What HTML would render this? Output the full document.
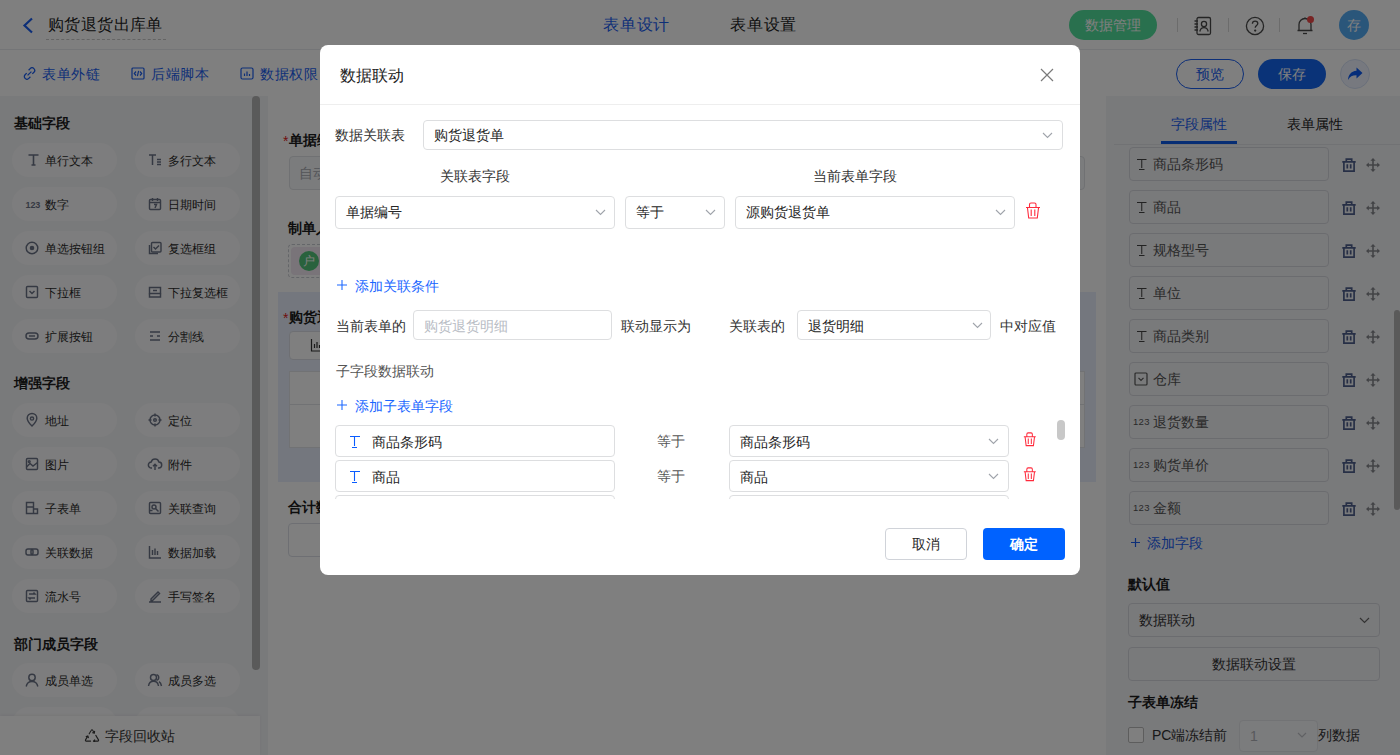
<!DOCTYPE html>
<html><head><meta charset="utf-8">
<style>
*{box-sizing:border-box;margin:0;padding:0}
html,body{width:1400px;height:755px;overflow:hidden;background:#fff;font-family:"Liberation Sans",sans-serif;color:#333;font-size:14px}
.abs{position:absolute}
.t{position:absolute;white-space:nowrap;line-height:1}
#hdr{position:absolute;left:0;top:0;width:1400px;height:50px;background:#fff;border-bottom:1px solid #e8eaee}
#tb{position:absolute;left:0;top:50px;width:1400px;height:46px;background:#fff}
#left{position:absolute;left:0;top:96px;width:268px;height:659px;background:#f3f4f7}
#canvas{position:absolute;left:268px;top:96px;width:838px;height:659px;background:#fff}
#right{position:absolute;left:1106px;top:96px;width:294px;height:659px;background:#f3f4f7}
.pill{position:absolute;width:105px;height:34px;border-radius:17px;background:#fbfbfc}
.pill .ic{position:absolute;left:13px;top:10px;width:14px;height:14px;overflow:visible}
.pill .tx{position:absolute;left:33px;top:12px;font-size:12px;line-height:13px;color:#2a2a2a;white-space:nowrap}
.h{position:absolute;font-size:14px;font-weight:bold;color:#1d1d1d;line-height:14px;white-space:nowrap}
.mask{position:absolute;left:0;top:0;width:1400px;height:755px;background:rgba(0,0,0,.5)}
.modal{position:absolute;left:320px;top:45px;width:760px;height:530px;background:#fff;border-radius:8px;overflow:hidden}
.sel{position:absolute;border:1px solid #dddee0;border-radius:4px;background:#fff}
.sel .v{position:absolute;left:10px;top:50%;margin-top:-7px;font-size:14px;line-height:14px;color:#262626;white-space:nowrap}
.chev{position:absolute;top:50%;margin-top:-3px;width:10px;height:6px}
.blue{color:#1a66ff}
</style></head><body>
<!-- ===== HEADER ===== -->
<div id="hdr">
  <svg class="abs" style="left:22px;top:17px" width="12" height="17" viewBox="0 0 12 17"><path d="M10 1.5 L2.5 8.5 L10 15.5" fill="none" stroke="#1a5ef0" stroke-width="2.2"/></svg>
  <div class="t" style="left:48px;top:17px;font-size:16px;color:#222;letter-spacing:.4px">购货退货出库单</div>
  <div class="abs" style="left:46px;top:39px;width:120px;border-top:1px dashed #c8c8c8"></div>
  <div class="t" style="left:603px;top:17px;font-size:16px;color:#1a5ef0;letter-spacing:.8px">表单设计</div>
  <div class="t" style="left:730px;top:17px;font-size:16px;color:#222;letter-spacing:.8px">表单设置</div>
  <div class="abs" style="left:1069px;top:10px;width:88px;height:30px;border-radius:15px;background:#52e09c"></div>
  <div class="t" style="left:1085px;top:18px;font-size:14px;color:#fff">数据管理</div>
  <div class="abs" style="left:1177px;top:18px;width:1px;height:14px;background:#d8d8d8"></div>
  <div class="abs" style="left:1228px;top:18px;width:1px;height:14px;background:#d8d8d8"></div>
  <div class="abs" style="left:1279px;top:18px;width:1px;height:14px;background:#d8d8d8"></div>
  <svg class="abs" style="left:1193px;top:16px" width="20" height="20" viewBox="0 0 20 20" fill="none" stroke="#4a4a4a" stroke-width="1.3"><rect x="4" y="1.5" width="13.5" height="17" rx="1.5"/><circle cx="11" cy="8" r="2.6"/><path d="M6.8 15.5c.6-2.6 2.2-3.8 4.2-3.8s3.6 1.2 4.2 3.8"/><path d="M1.5 5h3.5M1.5 8h3.5M1.5 11h3.5M1.5 14h3.5"/></svg>
  <svg class="abs" style="left:1245px;top:16px" width="20" height="20" viewBox="0 0 20 20" fill="none" stroke="#4a4a4a" stroke-width="1.3"><circle cx="10" cy="10" r="8.6"/><path d="M7.4 7.8c0-1.6 1.2-2.7 2.7-2.7s2.7 1.1 2.7 2.5c0 1.9-2.6 2.1-2.6 4.2"/><circle cx="10.2" cy="14.6" r=".5" fill="#4a4a4a"/></svg>
  <svg class="abs" style="left:1295px;top:15px" width="20" height="21" viewBox="0 0 20 21" fill="none" stroke="#4a4a4a" stroke-width="1.3"><path d="M4 15.5V9.5a6 6 0 0 1 12 0v6H2.5h15"/><path d="M8 18.5h4"/><path d="M10 2.5v1"/></svg>
  <div class="abs" style="left:1307px;top:16px;width:7px;height:7px;border-radius:50%;background:#f04848"></div>
  <div class="abs" style="left:1339px;top:10px;width:30px;height:30px;border-radius:50%;background:#55acf5"></div>
  <div class="t" style="left:1347px;top:18px;font-size:14px;color:#fff">存</div>
</div>
<!-- ===== TOOLBAR ===== -->
<div id="tb">
  <svg class="abs" style="left:23px;top:17px" width="13" height="13" viewBox="0 0 13 13" fill="none" stroke="#1a5ef0" stroke-width="1.3"><path d="M5.6 3.2l1.6-1.6a2.6 2.6 0 0 1 3.7 3.7L9.3 6.9"/><path d="M7.4 9.8l-1.6 1.6a2.6 2.6 0 0 1-3.7-3.7l1.6-1.6"/><path d="M4.6 8.4l3.8-3.8"/></svg>
  <div class="t" style="left:42px;top:17px;font-size:14px;color:#1a5ef0;letter-spacing:.6px">表单外链</div>
  <svg class="abs" style="left:131px;top:17px" width="14" height="13" viewBox="0 0 14 13" fill="none" stroke="#1a5ef0" stroke-width="1.2"><rect x="1" y="1" width="12" height="11" rx="1"/><path d="M5 4.5L3.3 6.5 5 8.5M9 4.5l1.7 2L9 8.5M7.6 3.8L6.4 9.2"/></svg>
  <div class="t" style="left:151px;top:17px;font-size:14px;color:#1a5ef0;letter-spacing:.6px">后端脚本</div>
  <svg class="abs" style="left:240px;top:17px" width="14" height="13" viewBox="0 0 14 13" fill="none" stroke="#1a5ef0" stroke-width="1.2"><rect x="1" y="1" width="12" height="11" rx="1.5"/><path d="M4.5 9V6.5M7 9V4.5M9.5 9V7"/></svg>
  <div class="t" style="left:260px;top:17px;font-size:14px;color:#1a5ef0;letter-spacing:.6px">数据权限</div>
  <div class="abs" style="left:1176px;top:9px;width:68px;height:30px;border-radius:15px;border:1.5px solid #1a5ef0"></div>
  <div class="t" style="left:1196px;top:17px;font-size:14px;color:#1a5ef0">预览</div>
  <div class="abs" style="left:1258px;top:9px;width:68px;height:30px;border-radius:15px;background:#1466f0"></div>
  <div class="t" style="left:1278px;top:17px;font-size:14px;color:#fff">保存</div>
  <div class="abs" style="left:1340px;top:9px;width:30px;height:30px;border-radius:50%;background:#eef3ff;border:1px solid #d6e0f5"></div>
  <svg class="abs" style="left:1347px;top:17px" width="16" height="14" viewBox="0 0 16 14"><path d="M9.5 0.5L15.5 6 9.5 11.5V8.3C5.5 8.2 3 9.5 1 13 1.3 8 4 4.2 9.5 3.8z" fill="#0a5af5"/></svg>
</div>
<div id="left"></div>
<div class="h" style="left:14px;top:116px">基础字段</div>
<div class="h" style="left:14px;top:376px">增强字段</div>
<div class="h" style="left:14px;top:637px">部门成员字段</div>
<div class="pill" style="left:12px;top:143px"><svg class="ic" viewBox="0 0 14 14" fill="none" stroke="#6b7386" stroke-width="1.45"><path d="M3.5 2h10M8.5 2v10M6.5 12h4" stroke-width="1.6"/></svg><div class="tx">单行文本</div></div>
<div class="pill" style="left:135px;top:143px"><svg class="ic" viewBox="0 0 14 14" fill="none" stroke="#6b7386" stroke-width="1.45"><path d="M1 2h7M4.5 2v10M9 6.5h4M9 9h4M9 11.5h4" stroke-width="1.5"/></svg><div class="tx">多行文本</div></div>
<div class="pill" style="left:12px;top:187px"><svg class="ic" viewBox="0 0 14 14" fill="none" stroke="#6b7386" stroke-width="1.45"><text x="0.5" y="10.5" font-size="9" font-weight="bold" letter-spacing="-.1" fill="#6b7386" stroke="none" font-family="Liberation Sans">123</text></svg><div class="tx">数字</div></div>
<div class="pill" style="left:135px;top:187px"><svg class="ic" viewBox="0 0 14 14" fill="none" stroke="#6b7386" stroke-width="1.45"><rect x="1.5" y="2.5" width="11" height="10" rx="1"/><path d="M1.5 5.5h11M4.5 1v3M9.5 1v3M6 7.5h2.5L7 11"/></svg><div class="tx">日期时间</div></div>
<div class="pill" style="left:12px;top:231px"><svg class="ic" viewBox="0 0 14 14" fill="none" stroke="#6b7386" stroke-width="1.45"><circle cx="7" cy="7" r="5.8"/><circle cx="7" cy="7" r="1.6" fill="#6b7386"/></svg><div class="tx">单选按钮组</div></div>
<div class="pill" style="left:135px;top:231px"><svg class="ic" viewBox="0 0 14 14" fill="none" stroke="#6b7386" stroke-width="1.45"><path d="M1.5 4V12.5H10"/><rect x="3.5" y="1.5" width="9.5" height="9.5" rx="1"/><path d="M5.5 6l2 2 3.5-3.5"/></svg><div class="tx">复选框组</div></div>
<div class="pill" style="left:12px;top:275px"><svg class="ic" viewBox="0 0 14 14" fill="none" stroke="#6b7386" stroke-width="1.45"><rect x="1.5" y="1.5" width="11" height="11" rx="1"/><path d="M4.5 6l2.5 2.5L9.5 6"/></svg><div class="tx">下拉框</div></div>
<div class="pill" style="left:135px;top:275px"><svg class="ic" viewBox="0 0 14 14" fill="none" stroke="#6b7386" stroke-width="1.45"><path d="M1.5 2.5h11v6h-11z"/><path d="M1.5 8.5v3.5h11V8.5M5 5.5h4"/></svg><div class="tx">下拉复选框</div></div>
<div class="pill" style="left:12px;top:319px"><svg class="ic" viewBox="0 0 14 14" fill="none" stroke="#6b7386" stroke-width="1.45"><rect x="1" y="4" width="12" height="6" rx="3"/><path d="M4 7h6"/></svg><div class="tx">扩展按钮</div></div>
<div class="pill" style="left:135px;top:319px"><svg class="ic" viewBox="0 0 14 14" fill="none" stroke="#6b7386" stroke-width="1.45"><path d="M2 3h10M2 7h3M9 7h3M2 11h10"/></svg><div class="tx">分割线</div></div>
<div class="pill" style="left:12px;top:403px"><svg class="ic" viewBox="0 0 14 14" fill="none" stroke="#6b7386" stroke-width="1.45"><path d="M7 13s-4.8-4.6-4.8-7.8a4.8 4.8 0 0 1 9.6 0C11.8 8.4 7 13 7 13z"/><circle cx="7" cy="5.5" r="1.6"/></svg><div class="tx">地址</div></div>
<div class="pill" style="left:135px;top:403px"><svg class="ic" viewBox="0 0 14 14" fill="none" stroke="#6b7386" stroke-width="1.45"><circle cx="7" cy="7" r="5"/><circle cx="7" cy="7" r="1.3"/><path d="M7 0.5v3M7 10.5v3M0.5 7h3M10.5 7h3"/></svg><div class="tx">定位</div></div>
<div class="pill" style="left:12px;top:447px"><svg class="ic" viewBox="0 0 14 14" fill="none" stroke="#6b7386" stroke-width="1.45"><rect x="1.5" y="1.5" width="11" height="11" rx="1"/><path d="M1.5 10l3.5-3.5 3 2.5 4.5-3.5"/><circle cx="4.2" cy="4.5" r=".9"/></svg><div class="tx">图片</div></div>
<div class="pill" style="left:135px;top:447px"><svg class="ic" viewBox="0 0 14 14" fill="none" stroke="#6b7386" stroke-width="1.45"><path d="M4 11H3.5a3 3 0 0 1-.3-6 4 4 0 0 1 7.7 0 3 3 0 0 1-.4 6H10"/><path d="M7 13V7.5M5 9.3l2-2 2 2"/></svg><div class="tx">附件</div></div>
<div class="pill" style="left:12px;top:491px"><svg class="ic" viewBox="0 0 14 14" fill="none" stroke="#6b7386" stroke-width="1.45"><path d="M1.5 1.5h7v11h-7zM1.5 6h7M8.5 8h4v4.5h-4"/></svg><div class="tx">子表单</div></div>
<div class="pill" style="left:135px;top:491px"><svg class="ic" viewBox="0 0 14 14" fill="none" stroke="#6b7386" stroke-width="1.45"><rect x="1.5" y="1.5" width="11" height="11" rx="1"/><circle cx="6" cy="6" r="2"/><path d="M7.5 7.5l3 3M1.5 9.5h3"/></svg><div class="tx">关联查询</div></div>
<div class="pill" style="left:12px;top:535px"><svg class="ic" viewBox="0 0 14 14" fill="none" stroke="#6b7386" stroke-width="1.45"><rect x="1" y="4" width="7" height="6" rx="2"/><rect x="6" y="4" width="7" height="6" rx="2"/></svg><div class="tx">关联数据</div></div>
<div class="pill" style="left:135px;top:535px"><svg class="ic" viewBox="0 0 14 14" fill="none" stroke="#6b7386" stroke-width="1.45"><path d="M1.5 1v12h11.5M4.5 10V5M7 10V3.5M9.5 10V6"/></svg><div class="tx">数据加载</div></div>
<div class="pill" style="left:12px;top:579px"><svg class="ic" viewBox="0 0 14 14" fill="none" stroke="#6b7386" stroke-width="1.45"><rect x="1.5" y="1.5" width="11" height="11" rx="1"/><path d="M4 5h6l-1.5-1.5M10 9H4l1.5 1.5"/></svg><div class="tx">流水号</div></div>
<div class="pill" style="left:135px;top:579px"><svg class="ic" viewBox="0 0 14 14" fill="none" stroke="#6b7386" stroke-width="1.45"><path d="M3 10l7-7 1.5 1.5-7 7H3zM1 13h12"/></svg><div class="tx">手写签名</div></div>
<div class="pill" style="left:12px;top:663px"><svg class="ic" viewBox="0 0 14 14" fill="none" stroke="#6b7386" stroke-width="1.45"><circle cx="7" cy="4.5" r="3.2"/><path d="M1.2 13.5c.6-3.4 2.8-5 5.8-5s5.2 1.6 5.8 5"/></svg><div class="tx">成员单选</div></div>
<div class="pill" style="left:135px;top:663px"><svg class="ic" viewBox="0 0 14 14" fill="none" stroke="#6b7386" stroke-width="1.45"><circle cx="5.5" cy="4.5" r="3"/><path d="M0.5 13c.5-3.3 2.4-4.8 5-4.8s4.5 1.5 5 4.8M8.5 1.6a3 3 0 0 1 0 5.8M11 8.6c1.3.7 2.1 2.2 2.5 4.4"/></svg><div class="tx">成员多选</div></div>
<div class="pill" style="left:12px;top:707px"><div class="tx"></div></div>
<div class="pill" style="left:135px;top:707px"><div class="tx"></div></div>
<div class="abs" style="left:252px;top:96px;width:8px;height:574px;border-radius:4px;background:#b4b4b4"></div>
<div class="abs" style="left:0;top:716px;width:260px;height:39px;background:#fff;box-shadow:0 -1px 3px rgba(0,0,0,.06)"></div>
<svg class="abs" style="left:84px;top:728px" width="16" height="14" viewBox="0 0 16 14" fill="none" stroke="#3a3a3a" stroke-width="1.1" stroke-linecap="round" stroke-linejoin="round"><path d="M5.2 5.8L7.3 2.3a.8.8 0 0 1 1.4 0L10.4 5.2M10.6 3.3l-.2 1.9-1.8-.5"/><path d="M11.8 7.4l2.7 4.5a.8.8 0 0 1-.7 1.2H9.4M10.7 11.8l-1.3 1.3 1.3 1.1"/><path d="M6.6 13.1H2.2a.8.8 0 0 1-.7-1.2L3.9 7.9M2.2 8.6l1.7-.7.5 1.8"/></svg>
<div class="t" style="left:105px;top:729px;font-size:14px;color:#333">字段回收站</div>

<div id="canvas"></div>

<div class="t" style="left:283px;top:134px;font-size:14px;color:#e02020">*</div>
<div class="t" style="left:289px;top:133px;font-size:14px;font-weight:bold;color:#1d1d1d">单据编号</div>
<div class="abs" style="left:289px;top:156px;width:796px;height:34px;border:1px solid #e0e2e6;border-radius:4px;background:#f7f8fa"></div>
<div class="t" style="left:299px;top:166px;font-size:14px;color:#a8abb2">自动生成</div>
<div class="t" style="left:288px;top:221px;font-size:14px;font-weight:bold;color:#1d1d1d">制单人</div>
<div class="abs" style="left:288px;top:244px;width:120px;height:34px;border:1px dashed #c9ccd2;border-radius:4px"></div>
<div class="abs" style="left:291px;top:247px;width:100px;height:28px;border-radius:4px;background:#f2e8f2"></div>
<div class="abs" style="left:299px;top:251px;width:20px;height:20px;border-radius:50%;background:#52c47a"></div>
<div class="t" style="left:303px;top:255px;font-size:12px;color:#fff">户</div>
<div class="abs" style="left:278px;top:292px;width:818px;height:190px;background:#e8effc"></div>
<div class="t" style="left:283px;top:311px;font-size:14px;color:#e02020">*</div>
<div class="t" style="left:289px;top:310px;font-size:14px;font-weight:bold;color:#1d1d1d">购货退货明细</div>
<div class="abs" style="left:289px;top:331px;width:120px;height:29px;border:1px solid #dcdfe6;border-radius:4px;background:#fff"></div>
<svg class="abs" style="left:310px;top:338px" width="14" height="14" viewBox="0 0 14 14" fill="none" stroke="#333" stroke-width="1.2"><path d="M1.5 1v12h11.5M4.5 10V6M7 10V4M9.5 10V7"/></svg>
<div class="abs" style="left:289px;top:371px;width:796px;height:77px;border:1px solid #e2e4e8;background:#fff"></div>
<div class="abs" style="left:289px;top:404px;width:796px;height:1px;background:#e2e4e8"></div>
<div class="t" style="left:288px;top:500px;font-size:14px;font-weight:bold;color:#1d1d1d">合计数量</div>
<div class="abs" style="left:288px;top:523px;width:780px;height:34px;border:1px solid #dcdfe6;border-radius:4px;background:#fff"></div>

<div id="right"></div>
<div class="t" style="left:1171px;top:117px;font-size:14px;color:#1a5ef0">字段属性</div>
<div class="t" style="left:1287px;top:117px;font-size:14px;color:#222">表单属性</div>
<div class="abs" style="left:1114px;top:144px;width:286px;height:1px;background:#e2e4e8"></div>
<div class="abs" style="left:1161px;top:141px;width:76px;height:3px;background:#0c5ae8"></div>
<div class="abs" style="left:1129px;top:147px;width:200px;height:34px;border:1px solid #d6d9de;border-radius:4px"></div>
<svg class="abs" style="left:1136px;top:158px" width="12" height="13" viewBox="0 0 12 13" fill="none" stroke="#454545" stroke-width="1.05"><path d="M1 1.5h9.5M5.75 1.5v8.5M3 11.5h5.5"/></svg>
<div class="t" style="left:1153px;top:157px;font-size:14px;color:#555">商品条形码</div>
<svg class="abs" style="left:1342px;top:158px" width="14" height="14" viewBox="0 0 14 14" fill="none" stroke="#4e5f8c" stroke-width="1.7"><path d="M4.3 3.4V1.2h5.4v2.2M0.3 3.9h13.4M1.9 4.6v8.6h10.2V4.6M5.3 6.3v4.2M8.7 6.3v4.2"/></svg>
<svg class="abs" style="left:1366px;top:158px" width="14" height="14" viewBox="0 0 14 14"><path d="M7 2v10M2 7h10" stroke="#85878c" stroke-width="1.6"/><path d="M7 0l2.6 2.8H4.4zM7 14l2.6-2.8H4.4zM0 7l2.8-2.6v5.2zM14 7l-2.8-2.6v5.2z" fill="#85878c"/></svg>
<div class="abs" style="left:1129px;top:190px;width:200px;height:34px;border:1px solid #d6d9de;border-radius:4px"></div>
<svg class="abs" style="left:1136px;top:201px" width="12" height="13" viewBox="0 0 12 13" fill="none" stroke="#454545" stroke-width="1.05"><path d="M1 1.5h9.5M5.75 1.5v8.5M3 11.5h5.5"/></svg>
<div class="t" style="left:1153px;top:200px;font-size:14px;color:#555">商品</div>
<svg class="abs" style="left:1342px;top:201px" width="14" height="14" viewBox="0 0 14 14" fill="none" stroke="#4e5f8c" stroke-width="1.7"><path d="M4.3 3.4V1.2h5.4v2.2M0.3 3.9h13.4M1.9 4.6v8.6h10.2V4.6M5.3 6.3v4.2M8.7 6.3v4.2"/></svg>
<svg class="abs" style="left:1366px;top:201px" width="14" height="14" viewBox="0 0 14 14"><path d="M7 2v10M2 7h10" stroke="#85878c" stroke-width="1.6"/><path d="M7 0l2.6 2.8H4.4zM7 14l2.6-2.8H4.4zM0 7l2.8-2.6v5.2zM14 7l-2.8-2.6v5.2z" fill="#85878c"/></svg>
<div class="abs" style="left:1129px;top:233px;width:200px;height:34px;border:1px solid #d6d9de;border-radius:4px"></div>
<svg class="abs" style="left:1136px;top:244px" width="12" height="13" viewBox="0 0 12 13" fill="none" stroke="#454545" stroke-width="1.05"><path d="M1 1.5h9.5M5.75 1.5v8.5M3 11.5h5.5"/></svg>
<div class="t" style="left:1153px;top:243px;font-size:14px;color:#555">规格型号</div>
<svg class="abs" style="left:1342px;top:244px" width="14" height="14" viewBox="0 0 14 14" fill="none" stroke="#4e5f8c" stroke-width="1.7"><path d="M4.3 3.4V1.2h5.4v2.2M0.3 3.9h13.4M1.9 4.6v8.6h10.2V4.6M5.3 6.3v4.2M8.7 6.3v4.2"/></svg>
<svg class="abs" style="left:1366px;top:244px" width="14" height="14" viewBox="0 0 14 14"><path d="M7 2v10M2 7h10" stroke="#85878c" stroke-width="1.6"/><path d="M7 0l2.6 2.8H4.4zM7 14l2.6-2.8H4.4zM0 7l2.8-2.6v5.2zM14 7l-2.8-2.6v5.2z" fill="#85878c"/></svg>
<div class="abs" style="left:1129px;top:276px;width:200px;height:34px;border:1px solid #d6d9de;border-radius:4px"></div>
<svg class="abs" style="left:1136px;top:287px" width="12" height="13" viewBox="0 0 12 13" fill="none" stroke="#454545" stroke-width="1.05"><path d="M1 1.5h9.5M5.75 1.5v8.5M3 11.5h5.5"/></svg>
<div class="t" style="left:1153px;top:286px;font-size:14px;color:#555">单位</div>
<svg class="abs" style="left:1342px;top:287px" width="14" height="14" viewBox="0 0 14 14" fill="none" stroke="#4e5f8c" stroke-width="1.7"><path d="M4.3 3.4V1.2h5.4v2.2M0.3 3.9h13.4M1.9 4.6v8.6h10.2V4.6M5.3 6.3v4.2M8.7 6.3v4.2"/></svg>
<svg class="abs" style="left:1366px;top:287px" width="14" height="14" viewBox="0 0 14 14"><path d="M7 2v10M2 7h10" stroke="#85878c" stroke-width="1.6"/><path d="M7 0l2.6 2.8H4.4zM7 14l2.6-2.8H4.4zM0 7l2.8-2.6v5.2zM14 7l-2.8-2.6v5.2z" fill="#85878c"/></svg>
<div class="abs" style="left:1129px;top:319px;width:200px;height:34px;border:1px solid #d6d9de;border-radius:4px"></div>
<svg class="abs" style="left:1136px;top:330px" width="12" height="13" viewBox="0 0 12 13" fill="none" stroke="#454545" stroke-width="1.05"><path d="M1 1.5h9.5M5.75 1.5v8.5M3 11.5h5.5"/></svg>
<div class="t" style="left:1153px;top:329px;font-size:14px;color:#555">商品类别</div>
<svg class="abs" style="left:1342px;top:330px" width="14" height="14" viewBox="0 0 14 14" fill="none" stroke="#4e5f8c" stroke-width="1.7"><path d="M4.3 3.4V1.2h5.4v2.2M0.3 3.9h13.4M1.9 4.6v8.6h10.2V4.6M5.3 6.3v4.2M8.7 6.3v4.2"/></svg>
<svg class="abs" style="left:1366px;top:330px" width="14" height="14" viewBox="0 0 14 14"><path d="M7 2v10M2 7h10" stroke="#85878c" stroke-width="1.6"/><path d="M7 0l2.6 2.8H4.4zM7 14l2.6-2.8H4.4zM0 7l2.8-2.6v5.2zM14 7l-2.8-2.6v5.2z" fill="#85878c"/></svg>
<div class="abs" style="left:1129px;top:362px;width:200px;height:34px;border:1px solid #d6d9de;border-radius:4px"></div>
<svg class="abs" style="left:1134px;top:372px" width="14" height="14" viewBox="0 0 14 14" fill="none" stroke="#555" stroke-width="1.2"><rect x="1" y="1" width="12" height="12" rx="1"/><path d="M4.5 5.8l2.5 2.5 2.5-2.5"/></svg>
<div class="t" style="left:1153px;top:372px;font-size:14px;color:#555">仓库</div>
<svg class="abs" style="left:1342px;top:373px" width="14" height="14" viewBox="0 0 14 14" fill="none" stroke="#4e5f8c" stroke-width="1.7"><path d="M4.3 3.4V1.2h5.4v2.2M0.3 3.9h13.4M1.9 4.6v8.6h10.2V4.6M5.3 6.3v4.2M8.7 6.3v4.2"/></svg>
<svg class="abs" style="left:1366px;top:373px" width="14" height="14" viewBox="0 0 14 14"><path d="M7 2v10M2 7h10" stroke="#85878c" stroke-width="1.6"/><path d="M7 0l2.6 2.8H4.4zM7 14l2.6-2.8H4.4zM0 7l2.8-2.6v5.2zM14 7l-2.8-2.6v5.2z" fill="#85878c"/></svg>
<div class="abs" style="left:1129px;top:405px;width:200px;height:34px;border:1px solid #d6d9de;border-radius:4px"></div>
<div class="t" style="left:1133px;top:417px;font-size:9.5px;color:#555;letter-spacing:.3px">123</div>
<div class="t" style="left:1153px;top:415px;font-size:14px;color:#555">退货数量</div>
<svg class="abs" style="left:1342px;top:416px" width="14" height="14" viewBox="0 0 14 14" fill="none" stroke="#4e5f8c" stroke-width="1.7"><path d="M4.3 3.4V1.2h5.4v2.2M0.3 3.9h13.4M1.9 4.6v8.6h10.2V4.6M5.3 6.3v4.2M8.7 6.3v4.2"/></svg>
<svg class="abs" style="left:1366px;top:416px" width="14" height="14" viewBox="0 0 14 14"><path d="M7 2v10M2 7h10" stroke="#85878c" stroke-width="1.6"/><path d="M7 0l2.6 2.8H4.4zM7 14l2.6-2.8H4.4zM0 7l2.8-2.6v5.2zM14 7l-2.8-2.6v5.2z" fill="#85878c"/></svg>
<div class="abs" style="left:1129px;top:448px;width:200px;height:34px;border:1px solid #d6d9de;border-radius:4px"></div>
<div class="t" style="left:1133px;top:460px;font-size:9.5px;color:#555;letter-spacing:.3px">123</div>
<div class="t" style="left:1153px;top:458px;font-size:14px;color:#555">购货单价</div>
<svg class="abs" style="left:1342px;top:459px" width="14" height="14" viewBox="0 0 14 14" fill="none" stroke="#4e5f8c" stroke-width="1.7"><path d="M4.3 3.4V1.2h5.4v2.2M0.3 3.9h13.4M1.9 4.6v8.6h10.2V4.6M5.3 6.3v4.2M8.7 6.3v4.2"/></svg>
<svg class="abs" style="left:1366px;top:459px" width="14" height="14" viewBox="0 0 14 14"><path d="M7 2v10M2 7h10" stroke="#85878c" stroke-width="1.6"/><path d="M7 0l2.6 2.8H4.4zM7 14l2.6-2.8H4.4zM0 7l2.8-2.6v5.2zM14 7l-2.8-2.6v5.2z" fill="#85878c"/></svg>
<div class="abs" style="left:1129px;top:491px;width:200px;height:34px;border:1px solid #d6d9de;border-radius:4px"></div>
<div class="t" style="left:1133px;top:503px;font-size:9.5px;color:#555;letter-spacing:.3px">123</div>
<div class="t" style="left:1153px;top:501px;font-size:14px;color:#555">金额</div>
<svg class="abs" style="left:1342px;top:502px" width="14" height="14" viewBox="0 0 14 14" fill="none" stroke="#4e5f8c" stroke-width="1.7"><path d="M4.3 3.4V1.2h5.4v2.2M0.3 3.9h13.4M1.9 4.6v8.6h10.2V4.6M5.3 6.3v4.2M8.7 6.3v4.2"/></svg>
<svg class="abs" style="left:1366px;top:502px" width="14" height="14" viewBox="0 0 14 14"><path d="M7 2v10M2 7h10" stroke="#85878c" stroke-width="1.6"/><path d="M7 0l2.6 2.8H4.4zM7 14l2.6-2.8H4.4zM0 7l2.8-2.6v5.2zM14 7l-2.8-2.6v5.2z" fill="#85878c"/></svg>
<svg class="abs" style="left:1131px;top:538px" width="9" height="9" viewBox="0 0 9 9" stroke="#1a5ef0" stroke-width="1.2"><path d="M4.5 0v9M0 4.5h9"/></svg>
<div class="t" style="left:1147px;top:536px;font-size:14px;color:#1a5ef0">添加字段</div>
<div class="t" style="left:1128px;top:577px;font-size:14px;font-weight:bold;color:#1d1d1d">默认值</div>
<div class="abs" style="left:1128px;top:603px;width:252px;height:34px;border:1px solid #d6d9de;border-radius:4px"></div>
<div class="t" style="left:1139px;top:613px;font-size:14px;color:#333">数据联动</div>
<svg class="abs" style="left:1359px;top:617px" width="11" height="7" viewBox="0 0 11 7" fill="none" stroke="#666" stroke-width="1.2"><path d="M1 1l4.5 4.5L10 1"/></svg>
<div class="abs" style="left:1128px;top:647px;width:252px;height:34px;border:1px solid #d6d9de;border-radius:4px"></div>
<div class="t" style="left:1212px;top:657px;font-size:14px;color:#333">数据联动设置</div>
<div class="t" style="left:1128px;top:695px;font-size:14px;font-weight:bold;color:#1d1d1d">子表单冻结</div>
<div class="abs" style="left:1128px;top:727px;width:16px;height:16px;border:1px solid #bbb;border-radius:2px;background:#fff"></div>
<div class="t" style="left:1152px;top:728px;font-size:14px;color:#333">PC端冻结前</div>
<div class="abs" style="left:1239px;top:720px;width:79px;height:32px;border:1px solid #e4e6ea;border-radius:4px;background:#f7f8fa"></div>
<div class="t" style="left:1250px;top:729px;font-size:14px;color:#b0b3b8">1</div>
<svg class="abs" style="left:1297px;top:732px" width="10" height="6" viewBox="0 0 10 6" fill="none" stroke="#c0c3c8" stroke-width="1.2"><path d="M1 1l4 4 4-4"/></svg>
<div class="t" style="left:1318px;top:728px;font-size:14px;color:#333">列数据</div>
<div class="abs" style="left:1394px;top:310px;width:6px;height:200px;border-radius:3px;background:#b4b4b4"></div>
<div class="mask"></div>
<div class="modal">
<div class="t" style="left:20px;top:23px;font-size:16px;color:#222">数据联动</div>
<svg class="abs" style="left:720px;top:23px" width="14" height="14" viewBox="0 0 14 14" fill="none" stroke="#7a7a7a" stroke-width="1.2"><path d="M1 1l12 12M13 1L1 13"/></svg>
<div class="abs" style="left:0;top:59px;width:760px;height:1px;background:#eeeeee"></div>
<div class="t" style="left:15px;top:83px;font-size:14px;color:#333">数据关联表</div>
<div class="sel" style="left:103px;top:75px;width:640px;height:30px"></div>
<div class="t" style="left:114px;top:83px;font-size:14px;color:#262626">购货退货单</div>
<svg class="abs" style="left:722px;top:87px" width="11" height="7" viewBox="0 0 11 7" fill="none" stroke="#a0a4ab" stroke-width="1.1"><path d="M1 1l4.5 4.5L10 1"/></svg>
<div class="t" style="left:120px;top:124px;font-size:14px;color:#333">关联表字段</div>
<div class="t" style="left:493px;top:124px;font-size:14px;color:#333">当前表单字段</div>
<div class="sel" style="left:15px;top:151px;width:280px;height:33px"></div>
<div class="t" style="left:26px;top:160px;font-size:14px;color:#262626">单据编号</div>
<svg class="abs" style="left:275px;top:164px" width="11" height="7" viewBox="0 0 11 7" fill="none" stroke="#a0a4ab" stroke-width="1.1"><path d="M1 1l4.5 4.5L10 1"/></svg>
<div class="sel" style="left:305px;top:151px;width:100px;height:33px"></div>
<div class="t" style="left:316px;top:160px;font-size:14px;color:#262626">等于</div>
<svg class="abs" style="left:385px;top:164px" width="11" height="7" viewBox="0 0 11 7" fill="none" stroke="#a0a4ab" stroke-width="1.1"><path d="M1 1l4.5 4.5L10 1"/></svg>
<div class="sel" style="left:415px;top:151px;width:280px;height:33px"></div>
<div class="t" style="left:426px;top:160px;font-size:14px;color:#262626">源购货退货单</div>
<svg class="abs" style="left:675px;top:164px" width="11" height="7" viewBox="0 0 11 7" fill="none" stroke="#a0a4ab" stroke-width="1.1"><path d="M1 1l4.5 4.5L10 1"/></svg>
<svg class="abs" style="left:705px;top:157px" width="16" height="17" viewBox="0 0 16 17" fill="none" stroke="#ff2a3c" stroke-width="1.1"><path d="M4.5 5V2.5a1.5 1.5 0 0 1 1.5-1.5h3.5a1.5 1.5 0 0 1 1.5 1.5V5M1 5.5h14M2.5 6l1.2 10h8.6l1.2-10M6.2 7.5v6.5M9.8 7.5v6.5"/></svg>
<svg class="abs" style="left:17px;top:235px" width="10" height="10" viewBox="0 0 10 10" stroke="#1a66ff" stroke-width="1.05"><path d="M5 0v10M0 5h10"/></svg>
<div class="t blue" style="left:35px;top:234px;font-size:14px">添加关联条件</div>
<div class="t" style="left:16px;top:274px;font-size:14px;color:#333">当前表单的</div>
<div class="sel" style="left:93px;top:265px;width:199px;height:30px"></div>
<div class="t" style="left:104px;top:274px;font-size:14px;color:#b8bcc4">购货退货明细</div>
<div class="t" style="left:301px;top:274px;font-size:14px;color:#333">联动显示为</div>
<div class="t" style="left:409px;top:274px;font-size:14px;color:#333">关联表的</div>
<div class="sel" style="left:477px;top:265px;width:194px;height:30px"></div>
<div class="t" style="left:488px;top:274px;font-size:14px;color:#262626">退货明细</div>
<svg class="abs" style="left:652px;top:277px" width="11" height="7" viewBox="0 0 11 7" fill="none" stroke="#a0a4ab" stroke-width="1.1"><path d="M1 1l4.5 4.5L10 1"/></svg>
<div class="t" style="left:680px;top:274px;font-size:14px;color:#333">中对应值</div>
<div class="t" style="left:16px;top:319px;font-size:14px;color:#555">子字段数据联动</div>
<svg class="abs" style="left:17px;top:355px" width="10" height="10" viewBox="0 0 10 10" stroke="#1a66ff" stroke-width="1.05"><path d="M5 0v10M0 5h10"/></svg>
<div class="t blue" style="left:35px;top:354px;font-size:14px">添加子表单字段</div>
<div class="abs" style="left:0;top:370px;width:760px;height:84px;overflow:hidden"><div class="sel" style="left:15px;top:10px;width:280px;height:32px"></div>
<svg class="abs" style="left:29px;top:20px" width="12" height="14" viewBox="0 0 12 14" fill="none" stroke="#0a5cff" stroke-width="1.1"><path d="M1 1.5h10M5.5 1.5v9.5M3 12.5h5"/></svg>
<div class="t" style="left:52px;top:20px;font-size:14px;color:#262626">商品条形码</div>
<div class="t" style="left:337px;top:19px;font-size:14px;color:#555">等于</div>
<div class="sel" style="left:409px;top:10px;width:280px;height:32px"></div>
<div class="t" style="left:420px;top:20px;font-size:14px;color:#262626">商品条形码</div>
<svg class="abs" style="left:668px;top:23px" width="11" height="7" viewBox="0 0 11 7" fill="none" stroke="#a0a4ab" stroke-width="1.1"><path d="M1 1l4.5 4.5L10 1"/></svg>
<svg class="abs" style="left:703px;top:17px" width="13.6" height="14.5" viewBox="0 0 16 17" fill="none" stroke="#ff2a3c" stroke-width="1.2"><path d="M4.5 5V2.5a1.5 1.5 0 0 1 1.5-1.5h3.5a1.5 1.5 0 0 1 1.5 1.5V5M1 5.5h14M2.5 6l1.2 10h8.6l1.2-10M6.2 7.5v6.5M9.8 7.5v6.5"/></svg>
<div class="sel" style="left:15px;top:45px;width:280px;height:32px"></div>
<svg class="abs" style="left:29px;top:55px" width="12" height="14" viewBox="0 0 12 14" fill="none" stroke="#0a5cff" stroke-width="1.1"><path d="M1 1.5h10M5.5 1.5v9.5M3 12.5h5"/></svg>
<div class="t" style="left:52px;top:55px;font-size:14px;color:#262626">商品</div>
<div class="t" style="left:337px;top:54px;font-size:14px;color:#555">等于</div>
<div class="sel" style="left:409px;top:45px;width:280px;height:32px"></div>
<div class="t" style="left:420px;top:55px;font-size:14px;color:#262626">商品</div>
<svg class="abs" style="left:668px;top:58px" width="11" height="7" viewBox="0 0 11 7" fill="none" stroke="#a0a4ab" stroke-width="1.1"><path d="M1 1l4.5 4.5L10 1"/></svg>
<svg class="abs" style="left:703px;top:52px" width="13.6" height="14.5" viewBox="0 0 16 17" fill="none" stroke="#ff2a3c" stroke-width="1.2"><path d="M4.5 5V2.5a1.5 1.5 0 0 1 1.5-1.5h3.5a1.5 1.5 0 0 1 1.5 1.5V5M1 5.5h14M2.5 6l1.2 10h8.6l1.2-10M6.2 7.5v6.5M9.8 7.5v6.5"/></svg>
<div class="sel" style="left:15px;top:80px;width:280px;height:32px"></div>
<svg class="abs" style="left:29px;top:90px" width="12" height="14" viewBox="0 0 12 14" fill="none" stroke="#0a5cff" stroke-width="1.1"><path d="M1 1.5h10M5.5 1.5v9.5M3 12.5h5"/></svg>
<div class="t" style="left:52px;top:90px;font-size:14px;color:#262626">规格型号</div>
<div class="t" style="left:337px;top:89px;font-size:14px;color:#555">等于</div>
<div class="sel" style="left:409px;top:80px;width:280px;height:32px"></div>
<div class="t" style="left:420px;top:90px;font-size:14px;color:#262626">规格型号</div>
<svg class="abs" style="left:668px;top:93px" width="11" height="7" viewBox="0 0 11 7" fill="none" stroke="#a0a4ab" stroke-width="1.1"><path d="M1 1l4.5 4.5L10 1"/></svg>
<svg class="abs" style="left:703px;top:87px" width="13.6" height="14.5" viewBox="0 0 16 17" fill="none" stroke="#ff2a3c" stroke-width="1.2"><path d="M4.5 5V2.5a1.5 1.5 0 0 1 1.5-1.5h3.5a1.5 1.5 0 0 1 1.5 1.5V5M1 5.5h14M2.5 6l1.2 10h8.6l1.2-10M6.2 7.5v6.5M9.8 7.5v6.5"/></svg></div>
<div class="abs" style="left:737px;top:375px;width:8px;height:20px;border-radius:4px;background:#c8c8c8"></div>
<div class="abs" style="left:565px;top:483px;width:82px;height:32px;border:1px solid #d0d3d9;border-radius:4px;background:#fff"></div>
<div class="t" style="left:592px;top:492px;font-size:14px;color:#262626">取消</div>
<div class="abs" style="left:663px;top:483px;width:82px;height:32px;border-radius:4px;background:#0062ff"></div>
<div class="t" style="left:690px;top:492px;font-size:14px;color:#fff;font-weight:bold">确定</div>
</div>
</body></html>
